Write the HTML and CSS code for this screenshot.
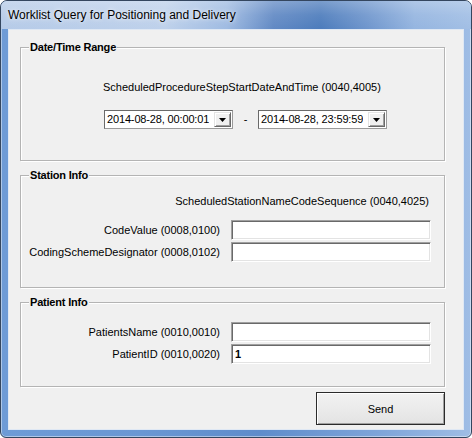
FILE: index.html
```html
<!DOCTYPE html>
<html>
<head>
<meta charset="utf-8">
<title>Worklist Query for Positioning and Delivery</title>
<link rel="stylesheet" href="styles.css">
</head>
<body>
<div class="window">
  <div class="titlebar"><span class="title">Worklist Query for Positioning and Delivery</span></div>
  <div class="client">
    <section class="group group-date">
      <div class="group-title">Date/Time Range</div>
      <div class="date-body">
        <div class="date-label">ScheduledProcedureStepStartDateAndTime (0040,4005)</div>
        <div class="date-row">
          <div class="combo">
            <span class="combo-text">2014-08-28, 00:00:01</span>
            <span class="combo-btn"><svg width="7" height="4" viewBox="0 0 7 4"><polygon points="0,0 7,0 3.5,4" fill="#000"/></svg></span>
          </div>
          <span class="dash">-</span>
          <div class="combo">
            <span class="combo-text">2014-08-28, 23:59:59</span>
            <span class="combo-btn"><svg width="7" height="4" viewBox="0 0 7 4"><polygon points="0,0 7,0 3.5,4" fill="#000"/></svg></span>
          </div>
        </div>
      </div>
    </section>

    <section class="group group-station">
      <div class="group-title">Station Info</div>
      <div class="seq-label">ScheduledStationNameCodeSequence (0040,4025)</div>
      <div class="fields fields-station">
        <label class="field-label">CodeValue (0008,0100)</label>
        <div class="textbox"></div>
        <label class="field-label">CodingSchemeDesignator (0008,0102)</label>
        <div class="textbox"></div>
      </div>
    </section>

    <section class="group group-patient">
      <div class="group-title">Patient Info</div>
      <div class="fields fields-patient">
        <label class="field-label">PatientsName (0010,0010)</label>
        <div class="textbox"></div>
        <label class="field-label">PatientID (0010,0020)</label>
        <div class="textbox textbox-value">1</div>
      </div>
    </section>

    <button class="send-btn" type="button">Send</button>
  </div>
</div>
</body>
</html>
```

FILE: styles.css
```css
html, body {
  margin: 0;
  padding: 0;
  background: #ffffff;
}

body {
  font-family: "Liberation Sans", Arial, sans-serif;
  font-size: 11px;
  color: #000;
}

.window {
  box-sizing: border-box;
  width: 472px;
  height: 438px;
  border: 1px solid #34465f;
  border-radius: 7px 7px 6px 6px;
  display: flex;
  flex-direction: column;
  overflow: hidden;
  background:
    linear-gradient(90deg, #6e9bd6 0%, #6a97d3 30%, #5f8ccb 55%, #7ea4d9 80%, #9fbde5 100%);
  box-shadow: inset 0 0 0 1px rgba(255, 255, 255, 0.45);
}

.titlebar {
  height: 28px;
  flex: none;
  padding-left: 7px;
  line-height: 28px;
  background:
    linear-gradient(180deg, rgba(255,255,255,0.25) 0%, rgba(255,255,255,0.08) 50%, rgba(255,255,255,0) 100%),
    linear-gradient(90deg, #b6cbe8 0%, #bed1eb 35%, #9fbbe2 48%, #6189c4 58%, #4d7cbc 68%, #6f96cd 78%, #95b5e0 88%, #a2bfe5 100%);
}

.title {
  font-family: "Liberation Sans", Arial, sans-serif;
  font-size: 12px;
  color: #000;
  text-shadow: 0 0 6px rgba(255, 255, 255, 0.8), 0 0 3px rgba(255, 255, 255, 0.6);
}

.client {
  box-sizing: border-box;
  width: 456px;
  height: 401px;
  margin: 0 7px 0 7px;
  border: 1px solid #dfe8f4;
  background: #f0f0f0;
  padding: 17px 18px 0 11px;
  display: flex;
  flex-direction: column;
  align-items: flex-start;
}

.group {
  box-sizing: border-box;
  width: 425px;
  border: 1px solid #b4b4b4;
  box-shadow: inset 1px 1px 0 #ffffff, 1px 1px 0 #ffffff;
  display: flex;
  flex-direction: column;
  align-items: stretch;
}

.group-date { height: 114px; }
.group-station { height: 113px; margin-top: 14px; }
.group-patient { height: 85px; margin-top: 14px; }

.group-title {
  align-self: flex-start;
  margin: -8px 0 0 8px;
  padding: 0 1px;
  line-height: 14px;
  font-weight: bold;
  font-size: 11px;
  background: #f0f0f0;
  letter-spacing: -0.2px;
}

.date-body {
  padding-left: 82px;
}

.date-label {
  margin-top: 27px;
  line-height: 13px;
}

.date-row {
  margin-top: 16px;
  margin-left: 1px;
  display: flex;
  align-items: center;
}

.combo {
  box-sizing: border-box;
  width: 129px;
  height: 19px;
  background: #fff;
  border: 1px solid;
  border-color: #6a6a6a #9a9a9a #9a9a9a #6a6a6a;
  display: flex;
  align-items: center;
  justify-content: space-between;
}

.combo-text {
  padding-left: 2px;
  line-height: 15px;
  font-size: 11px;
  letter-spacing: -0.15px;
  white-space: nowrap;
  overflow: hidden;
}

.combo-btn {
  box-sizing: border-box;
  flex: none;
  width: 17px;
  height: 15px;
  margin-right: 1px;
  background: #f0f0f0;
  border: 1px solid;
  border-color: #e3e3e3 #696969 #696969 #e3e3e3;
  box-shadow: inset 1px 1px 0 #ffffff, inset -1px -1px 0 #a0a0a0;
  display: flex;
  align-items: center;
  justify-content: center;
}

.combo-btn svg {
  display: block;
}

.dash {
  width: 25px;
  text-align: center;
  line-height: 13px;
}

.seq-label {
  margin-top: 13px;
  padding-right: 15px;
  text-align: right;
  line-height: 13px;
}

.fields {
  display: grid;
  grid-template-columns: 1fr 200px;
  grid-auto-rows: 20px;
  column-gap: 11px;
  row-gap: 2px;
  padding-right: 13px;
  align-items: center;
}

.fields-station { margin-top: 12px; }
.fields-patient { margin-top: 13px; }

.field-label {
  text-align: right;
  line-height: 13px;
  white-space: nowrap;
}

.textbox {
  box-sizing: border-box;
  height: 20px;
  background: #fff;
  border-style: solid;
  border-width: 1px;
  border-color: #a0a0a0 #ffffff #ffffff #a0a0a0;
  box-shadow: inset 1px 1px 0 #696969, inset -1px -1px 0 #e3e3e3;
  padding: 2px 0 0 3px;
  line-height: 14px;
}

.textbox-value {
  font-weight: bold;
  font-size: 11px;
}

.send-btn {
  align-self: flex-end;
  box-sizing: border-box;
  width: 129px;
  height: 33px;
  margin-top: 5px;
  padding: 0;
  border: 1px solid #2b2b2b;
  background: linear-gradient(180deg, #f2f2f2 0%, #ebebeb 50%, #e3e3e3 100%);
  box-shadow: inset 1px 1px 0 #ffffff, inset -1px -1px 0 #a0a0a0;
  font-family: "Liberation Sans", Arial, sans-serif;
  font-size: 11px;
  color: #000;
  border-radius: 0;
}
```
